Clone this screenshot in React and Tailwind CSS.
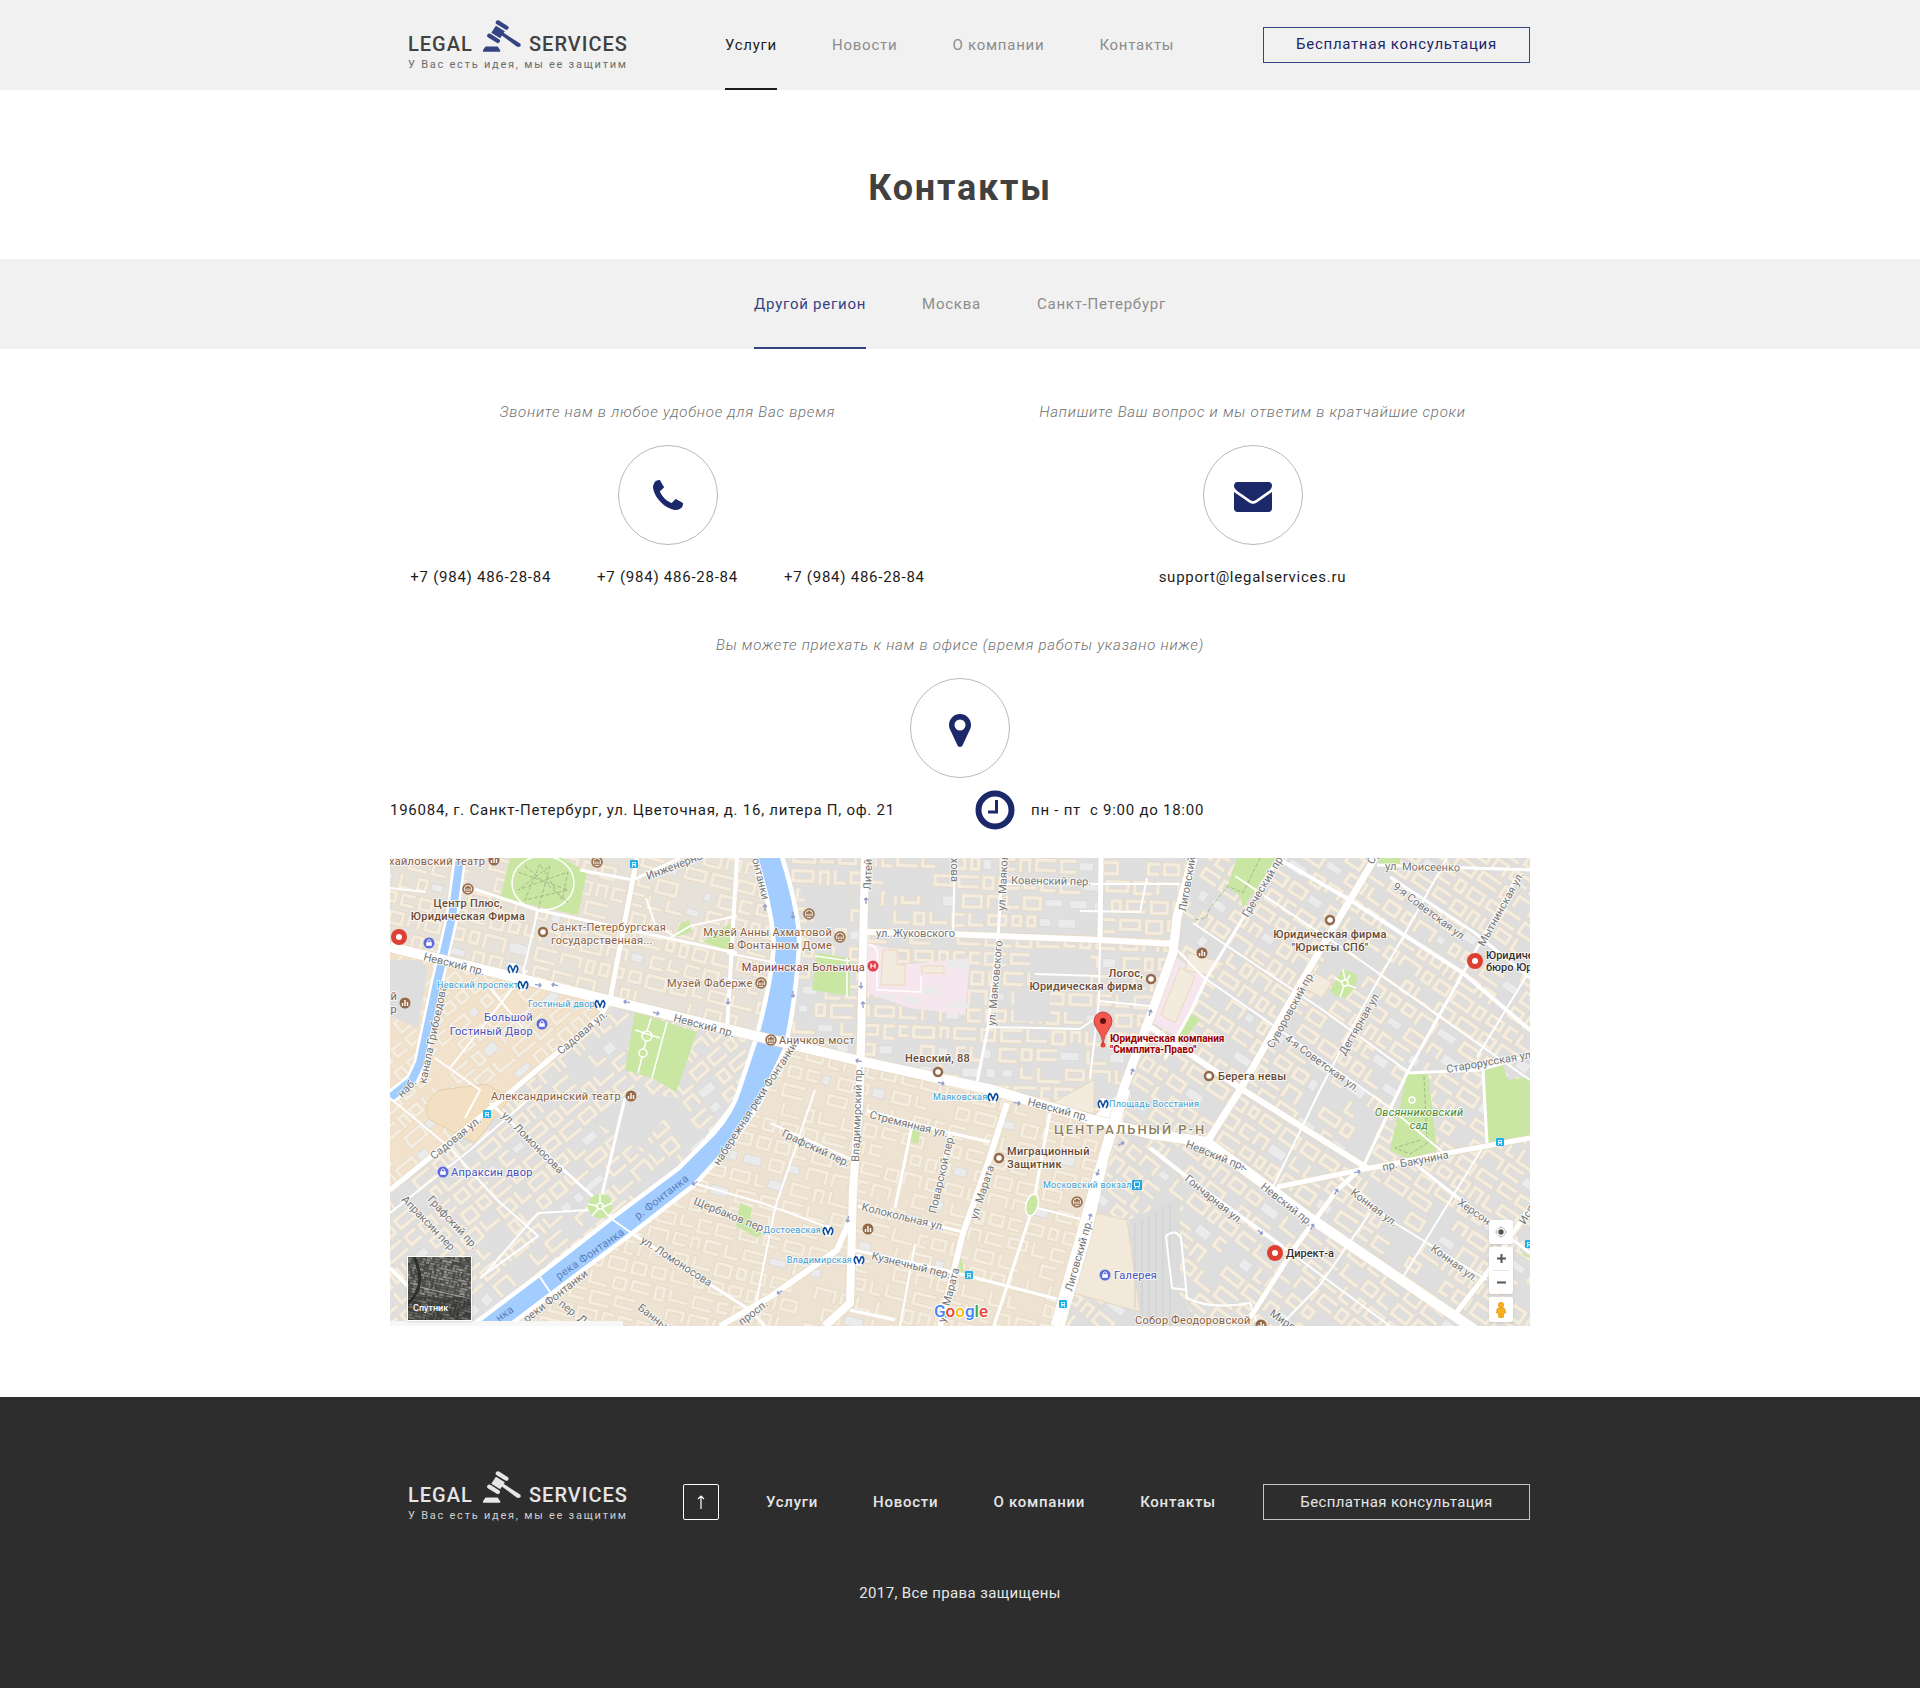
import React from 'react';
import clsx from 'clsx';

const navLinks = ['Услуги', 'Новости', 'О компании', 'Контакты'];
const regions = ['Другой регион', 'Москва', 'Санкт-Петербург'];
const phones = ['+7 (984) 486-28-84', '+7 (984) 486-28-84', '+7 (984) 486-28-84'];

const Gavel = () => (
  <svg className="w-[38px] h-8 shrink-0" viewBox="0 0 115 96" fill="currentColor" aria-hidden="true">
    <path d="M45 7 L71 23 M19 47 L45 63" stroke="currentColor" strokeWidth="13" strokeLinecap="round" />
    <path d="M39 17 L66 34 L52 55 L25 38 Z" />
    <path d="M54 44 L60 37 L111 70 Q117 76 112 80 Q108 83 102 80 Z" />
    <path d="M8 80 h36 l5 6 v3 h3 v7 h-52 v-7 h3 v-3 z" />
  </svg>
);

const PhoneIcon = () => (
  <svg className="w-[30px] h-[30px]" viewBox="0 128 1408 1408" fill="currentColor" aria-hidden="true">
    <path d="M1408 1240q0 27-10 70.500t-21 68.500q-21 50-122 106-94 51-186 51-27 0-53-3.500t-57.500-12.500-47-14.500-55.500-20.500-49-18q-98-35-175-83-127-79-264-216t-216-264q-48-77-83-175-3-9-18-49t-20.500-55.500-14.500-47-12.500-57.500-3.500-53q0-92 51-186 56-101 106-122 25-11 68.500-21t70.500-10q14 0 21 3 18 6 53 76 11 19 30 54t35 63.500 31 53.500q3 4 17.500 25t21.500 35.500 7 28.500q0 20-28.500 50t-62 55-62 53-28.500 46q0 9 5 22.500t8.500 20.500 14 24 11.500 19q76 137 174 235t235 174q2 1 19 11.500t24 14 20.500 8.500 22.500 5q18 0 46-28.500t53-62 55-62 50-28.500q14 0 28.500 7t35.500 21.500 25 17.500q25 15 53.500 31t63.500 35 54 30q70 35 76 53 3 7 3 21z" />
  </svg>
);

const EnvelopeIcon = () => (
  <svg className="w-[38px] h-[30px] mt-1" viewBox="0 256 1792 1408" fill="currentColor" aria-hidden="true">
    <path d="M1792 710v794q0 66-47 113t-113 47h-1472q-66 0-113-47t-47-113v-794q44 49 101 87 362 246 497 345 57 42 92.500 65.500t94.500 48 110 24.500h2q51 0 110-24.500t94.500-48 92.500-65.500q170-123 498-345 57-39 100-87zm0-294q0 79-49 151t-122 123q-376 261-468 325-10 7-42.500 31t-54 38.500-52 32.500-57.500 27-50 9h-2q-23 0-50-9t-57.500-27-52-32.500-54-38.500-42.500-31q-91-64-262-182.500t-205-142.500q-62-42-117-115.500t-55-136.500q0-78 41.500-130t118.500-52h1472q65 0 112.500 47t47.500 113z" />
  </svg>
);

const MarkerIcon = () => (
  <svg className="w-[22px] h-[33px] mt-1" viewBox="0 128 1024 1536" fill="currentColor" aria-hidden="true">
    <path d="M768 640q0-106-75-181t-181-75-181 75-75 181 75 181 181 75 181-75 75-181zm256 0q0 109-33 179l-364 774q-16 33-47.500 52t-67.500 19-67.500-19-46.500-52l-365-774q-33-70-33-179 0-212 150-362t362-150 362 150 150 362z" />
  </svg>
);

const Logo = ({ dark }) => (
  <a href="#" className={clsx('block ml-[18px] w-[225px]', dark ? 'text-[#e6e6e6]' : 'text-[#414141]')}>
    <span className="flex items-end text-xl leading-6 font-medium tracking-[1px]">
      <span className="w-[75px]">LEGAL</span>
      <span className={clsx('mb-1 mr-2', dark ? 'text-[#e6e6e6]' : 'text-[#364382]')}>
        <Gavel />
      </span>
      <span>SERVICES</span>
    </span>
    <span className={clsx('block text-[11px] leading-[18px] tracking-[0.16em] whitespace-nowrap', dark ? 'text-[#cfcfcf]' : 'text-[#6b6b6b]')}>
      У Вас есть идея, мы ее защитим
    </span>
  </a>
);

const CircleIcon = ({ children }) => (
  <div className="w-[100px] h-[100px] rounded-full border border-[#b9b9b9] flex items-center justify-center text-[#1b2869]">
    {children}
  </div>
);

const Caption = ({ children }) => (
  <p className="text-[15px] leading-6 italic font-light tracking-wider text-[#6f6f6f]">{children}</p>
);

// ---------- map ----------

// base: ground colour, angle: direction of the street grid
const districts = [
  { id: 'd1', points: '0,0 380,0 400,90 385,186 0,92', angle: 14, base: '#e6e1d9', seed: 3 },
  { id: 'd2', points: '0,92 225,146 205,165 0,334', angle: -40, base: '#f3e2cb', seed: 8 },
  { id: 'd3', points: '205,165 225,146 385,186 350,235 290,312 90,468 0,468 0,334', angle: -40, base: '#dfdfdf', seed: 12 },
  { id: 'd4', points: '385,0 803,0 783,95 733,232 700,262 385,188 405,90', angle: 2, base: '#dfdfdf', seed: 21 },
  { id: 'd5', points: '385,188 733,265 663,468 110,468 303,325', angle: 14, base: '#eee3d3', seed: 30 },
  { id: 'd6', points: '803,0 1140,0 1140,468 1060,468 817,284 733,265 733,232 783,95', angle: 34, base: '#dedede', seed: 44 },
  { id: 'd7', points: '733,265 817,284 1060,455 1080,468 663,468', angle: 38, base: '#dedede', seed: 51 },
];

const makeRandom = (seed) => {
  let s = seed * 7919;
  return () => {
    s = (s * 16807) % 2147483647;
    return s / 2147483647;
  };
};

const makeBuildings = ({ points, angle, seed }) => {
  const random = makeRandom(seed);
  const list = points.split(' ').map((p) => p.split(',').map(Number));
  const xs = list.map((p) => p[0]);
  const ys = list.map((p) => p[1]);
  const cx = (Math.min(...xs) + Math.max(...xs)) / 2;
  const cy = (Math.min(...ys) + Math.max(...ys)) / 2;
  const r = Math.hypot(Math.max(...xs) - cx, Math.max(...ys) - cy);
  const rad = (angle * Math.PI) / 180;
  const result = [];
  for (let y = -r; y < r; y += 19) {
    let x = -r;
    while (x < r) {
      const w = 11 + Math.round(random() * 14);
      const kind = random();
      const px = cx + x * Math.cos(rad) - y * Math.sin(rad);
      const py = cy + x * Math.sin(rad) + y * Math.cos(rad);
      if (px > -30 && px < 1170 && py > -30 && py < 500 && kind < 0.9) {
        result.push({ x: cx + x, y: cy + y, w, h: 13 + Math.round(random() * 3), kind });
      }
      x += w + 3;
    }
  }
  return { cx, cy, items: result };
};

const shape = ({ x, y, w, h, kind }) => {
  if (kind < 0.35) return `M${x} ${y}h${w}v${h}h${-w}z M${x + 4} ${y + 4}v${h - 8}h${w - 8}v${8 - h}z`;
  if (kind < 0.55) return `M${x} ${y}h${w}v4h${4 - w}v${h - 8}h${w - 4}v4h${-w}z`;
  if (kind < 0.7) return `M${x} ${y}h4v${h - 4}h${w - 4}v4h${-w}z`;
  if (kind < 0.8) return `M${x} ${y}h${w}v${h}h-4v${4 - h}h${8 - w}v${h - 4}h-4z`;
  return `M${x} ${y + 3}h${w - 4}v${h - 6}h${4 - w}z`;
};

const District = (district) => {
  const { id, points, angle, base } = district;
  const { cx, cy, items } = makeBuildings(district);
  return (
    <g clipPath={`url(#${id})`}>
      <clipPath id={id}>
        <polygon points={points} />
      </clipPath>
      <polygon points={points} fill={base} />
      <g transform={`rotate(${angle} ${cx} ${cy})`} strokeWidth="0.7">
        {items.map((item, i) => (
          <path
            key={i}
            d={shape(item)}
            fill={item.kind > 0.8 ? '#ebebeb' : '#f3ecdf'}
            stroke={item.kind > 0.8 ? '#d8d8d8' : '#e5d8c1'}
          />
        ))}
      </g>
    </g>
  );
};

const parks = [
  'M120 0H172L197 14L188 57L110 40Z',
  'M299 62L302 74L285 79L290 66Z',
  'M342 64V94L313 84Z',
  'M245 154L307 174L286 234L262 220L235 212Z',
  'M427 95L460 100V138L422 132Z',
  'M847 0H887L853 50L850 38L837 29Z',
  'M953 111L967 117L966 128L956 140L945 138L940 132Z',
  'M800 155L810 162L795 180L787 177Z',
  'M987 0H1010V8L990 7Z',
  'M1017 216L1038 215L1047 292L1020 302L1000 292Z',
  'M1093 212L1112 205L1118 222L1140 219V277L1097 285Z',
  'M571 400L575 417L567 415Z',
  'M522 268L531 270L528 286L519 284Z',
  'M350 345L362 350L360 362L372 375L368 380L346 368Z',
  'M1131 394L1140 398V400L1134 398Z',
];

// [path, width]
const roads = [
  ['M75 28L148 52L240 72L347 95', 3],
  ['M148 52L133 115', 2],
  ['M190 12L243 22L290 0', 3],
  ['M280 80L300 68L347 58', 2],
  ['M256 40L265 66L285 79', 2],
  ['M347 0L337 172', 4],
  ['M337 95L386 105', 2],
  ['M0 240L60 290L105 340L148 378L90 420', 2],
  ['M100 245L155 295L210 345L223 362', 3],
  ['M210 345L235 240', 3],
  ['M148 355L200 352', 2],
  ['M148 355L95 416', 2],
  ['M0 410L20 430L50 468', 4],
  ['M100 130L133 170', 2],
  ['M0 30L35 34', 2],
  ['M45 200L90 232L75 260', 2],
  ['M0 355L80 292L140 240', 2],
  ['M137 112L60 210', 2],
  ['M240 374L310 420L360 452L375 468', 3],
  ['M303 325L372 345L440 370', 2],
  ['M380 265L463 302', 2],
  ['M425 232L385 350L365 450', 2],
  ['M477 253L560 275L600 284', 3],
  ['M522 268L505 350', 3],
  ['M560 275L545 350', 2],
  ['M468 348L573 374', 3],
  ['M465 392L567 415L667 441', 3],
  ['M525 386L510 468', 2],
  ['M460 452L505 462', 3],
  ['M660 255L645 336M640 358L604 468', 3],
  ['M648 350L690 361', 2],
  ['M565 0L563 75', 2],
  ['M613 0L608 79L598 169L587 225', 3],
  ['M598 169L690 171L703 162', 2],
  ['M645 116L709 118', 2],
  ['M613 26L790 26M690 53L750 54L757 20', 2],
  ['M709 143L760 148', 2],
  ['M711 0L710 82', 5],
  ['M710 82L709 142L700 220', 2],
  ['M887 2L850 65L817 119L800 155L775 200', 3],
  ['M1057 0L1013 79L973 149L930 232L883 329', 2],
  ['M1000 19L1085 75L1140 120', 3],
  ['M845 18L960 95L1073 175L1140 222', 2],
  ['M887 0L960 42L1073 115L1140 172', 4],
  ['M803 65L930 150L1020 215', 2],
  ['M785 90L813 119L880 165L1000 250L1060 300', 2],
  ['M1140 112L1087 199', 2],
  ['M1017 215L1090 212L1140 197', 3],
  ['M1127 19L1073 115L1017 215L973 309', 3],
  ['M1093 212L1097 285', 3],
  ['M987 7L1140 12', 3],
  ['M950 319L1000 362L1097 422', 2],
  ['M1093 289L1013 419', 2],
  ['M980 355L930 427L890 468', 2],
  ['M893 389L1000 468', 2],
  ['M1020 302L1067 339L1140 395', 3],
  ['M760 290L810 329L893 389', 4],
  ['M887 329L960 314L1047 297L1140 280', 5],
  ['M1140 349L1097 415L1063 459', 5],
  ['M973 309L947 332L903 392L860 460', 5],
  ['M760 169L850 230L977 310', 6],
  ['M985 0L960 42L920 109L850 232L817 284', 7],
  ['M247 0L237 52L220 142L210 159L123 232L0 332', 5],
  ['M477 74L560 76L710 82L785 86', 6],
  ['M617 245L600 299L573 375L550 468', 6],
  ['M463 355L447 392L380 439L330 468', 6],
  ['M475 0L470 232L463 332L460 445L435 468', 8],
  ['M803 0L787 59L783 95L760 159L733 232L707 319L665 468', 9],
  ['M738 232L716 300L698 380L672 468', 5],
  ['M0 89L370 179L470 203L603 232L700 261L760 276L817 284L920 360L1060 455L1085 472', 10],
];

const BROWN = 'fill-[#8a6142] text-[11px] tracking-wide';
const DARK = 'fill-[#6a4a35] text-[11px] font-medium tracking-wide';
const STREET = 'fill-[#757575] text-[11px]';
const METRO = 'fill-[#3a9fd6] text-[9px] tracking-wide';
const SHOP = 'fill-[#4950bd] text-[11px] tracking-wide';
const RED = 'fill-[#9c0000] text-[10px] font-bold';
const RIVER = 'fill-[#5a80bd] text-[11px] tracking-wide';
const BLACK = 'fill-[#333333] text-[11px] font-medium';
const GREEN = 'fill-[#4a8a2c] text-[11px] italic tracking-wide';

// [text, x, y, style, rotation, anchor]
const labels = [
  ['Невский пр.', 33, 102, STREET, 14],
  ['Невский пр.', 283, 163, STREET, 15],
  ['Невский пр.', 637, 247, STREET, 15],
  ['Невский пр.', 795, 289, STREET, 22],
  ['Невский пр.', 870, 330, STREET, 38],
  ['Садовая ул.', 171, 197, STREET, -40],
  ['Садовая ул.', 44, 302, STREET, -39],
  ['канала Грибоедова', 36, 226, STREET, -78],
  ['наб.', 12, 240, STREET, -45],
  ['Инженерная', 258, 22, STREET, -21],
  ['онтанки', 362, 1, STREET, 76],
  ['Литейн', 481, 32, STREET, -88],
  ['хова', 561, 0, STREET, 90],
  ['ул. Маяков', 615, 53, STREET, -87],
  ['ул. Маяковского', 605, 168, STREET, -85],
  ['Ковенский пер.', 621, 26, STREET, 1],
  ['ул. Жуковского', 486, 79, STREET, 0],
  ['Лиговский', 796, 54, STREET, -80],
  ['Греческий пр.', 858, 60, STREET, -59],
  ['ул. Моисеенко', 995, 12, STREET, 1],
  ['9-я Советская ул.', 1002, 30, STREET, 37],
  ['Мытнинская ул.', 1094, 89, STREET, -61],
  ['Суворовский пр.', 883, 191, STREET, -61],
  ['Ср', 983, 7, STREET, -61],
  ['4-я Советская ул.', 894, 182, STREET, 36],
  ['Дегтярная ул.', 955, 198, STREET, -60],
  ['Старорусская ул', 1057, 215, STREET, -10],
  ['ул. Ломоносова', 111, 258, STREET, 45],
  ['Апраксин пер.', 11, 342, STREET, 46],
  ['Графский пр.', 37, 342, STREET, 47],
  ['набережная реки Фонтанки', 329, 308, STREET, -57],
  ['реки Фонтанки', 137, 465, STREET, -38],
  ['пер. Д', 168, 447, STREET, 38],
  ['Щербаков пер.', 303, 346, STREET, 22],
  ['ул. Ломоносова', 250, 384, STREET, 33],
  ['Банный', 247, 451, STREET, 38],
  ['просп.', 352, 468, STREET, -38],
  ['Графский пер.', 391, 278, STREET, 25],
  ['Владимирский пр.', 469, 304, STREET, -88],
  ['Стремянная ул.', 479, 260, STREET, 14],
  ['Поварской пер.', 546, 356, STREET, -77],
  ['Колокольная ул.', 471, 352, STREET, 14],
  ['Кузнечный пер.', 481, 401, STREET, 14],
  ['ул. Марата', 587, 362, STREET, -72],
  ['ул. Марата', 555, 465, STREET, -75],
  ['Лиговский пр.', 682, 434, STREET, -74],
  ['Гончарная ул.', 794, 322, STREET, 39],
  ['пр. Бакунина', 993, 313, STREET, -11],
  ['Конная ул.', 960, 336, STREET, 37],
  ['Конная ул.', 1040, 392, STREET, 36],
  ['Херсонс', 1067, 346, STREET, 35],
  ['Исп', 1135, 367, STREET, -60],
  ['Мирг', 879, 457, STREET, 35],
  ['р. Фонтанка', 248, 362, RIVER, -38],
  ['река Фонтанка', 169, 422, RIVER, -35],
  ['нка', 109, 464, RIVER, -35],
  ['хайловский театр', -1, 7, BROWN],
  ['Центр Плюс,', 78, 49, DARK, 0, 'middle'],
  ['Юридическая Фирма', 78, 62, DARK, 0, 'middle'],
  ['Санкт-Петербургская', 161, 73, BROWN],
  ['государственная...', 161, 86, BROWN],
  ['Музей Анны Ахматовой', 442, 78, BROWN, 0, 'end'],
  ['в Фонтанном Доме', 442, 91, BROWN, 0, 'end'],
  ['Музей Фаберже', 277, 129, BROWN],
  ['Мариинская Больница', 475, 113, 'fill-[#8f3b3b] text-[11px] tracking-wide', 0, 'end'],
  ['Невский проспект', 47, 130, METRO],
  ['Гостиный двор', 138, 149, METRO],
  ['Большой', 143, 163, SHOP, 0, 'end'],
  ['Гостиный Двор', 143, 177, SHOP, 0, 'end'],
  ['й', 7, 142, BROWN, 0, 'end'],
  ['р', 7, 155, BROWN, 0, 'end'],
  ['Логос,', 753, 119, DARK, 0, 'end'],
  ['Юридическая фирма', 753, 132, DARK, 0, 'end'],
  ['Юридическая компания', 720, 184, RED],
  ['"Симплита-Право"', 720, 195, RED],
  ['Аничков мост', 389, 186, BROWN],
  ['Невский, 88', 515, 204, DARK],
  ['Юридическая фирма', 940, 80, DARK, 0, 'middle'],
  ['"Юристы СПб"', 940, 93, DARK, 0, 'middle'],
  ['Юридиче', 1096, 101, BLACK],
  ['бюро Юр', 1096, 113, BLACK],
  ['Берега невы', 828, 222, DARK],
  ['Александринский театр', 101, 242, BROWN],
  ['Апраксин двор', 61, 318, SHOP],
  ['Достоевская', 431, 375, METRO, 0, 'end'],
  ['Владимирская', 462, 405, METRO, 0, 'end'],
  ['Маяковская', 543, 242, METRO],
  ['Площадь Восстания', 719, 249, METRO],
  ['Миграционный', 617, 297, DARK],
  ['Защитник', 617, 310, DARK],
  ['Московский вокзал', 653, 330, METRO],
  ['Галерея', 724, 421, SHOP],
  ['Собор Феодоровской', 745, 466, BROWN],
  ['Директ-а', 896, 399, BLACK],
  ['Овсянниковский', 1029, 258, GREEN, 0, 'middle'],
  ['сад', 1029, 271, GREEN, 0, 'middle'],
  ['ЦЕНТРАЛЬНЫЙ Р-Н', 664, 276, 'fill-[#8d8060] text-[13px] font-medium tracking-[2px]'],
];

// brown: museum / office dots, the inner glyph differs
const rings = [[153, 74], [761, 121], [548, 214], [940, 62], [819, 218], [609, 300]];
const museums = [[207, 4], [78, 31], [419, 56], [450, 79], [371, 125], [687, 344], [381, 182]];
const theatres = [[104, 2], [241, 238], [812, 95], [15, 145], [478, 371], [871, 467]];
const metros = [[123, 111], [133, 127], [210, 146], [438, 373], [469, 402], [603, 239], [713, 246]];
const shops = [[39, 85], [152, 166], [53, 314], [715, 417]];
const trams = [[244, 6], [97, 256], [579, 417], [673, 446], [1110, 284], [1139, 386]];
const redDots = [[9, 79], [1085, 103], [885, 395]];
const arrows = [
  [148, 127, 10], [165, 127, 190], [237, 144, 190], [266, 155, 15], [338, 143, 90], [403, 57, 90], [403, 136, 90],
  [476, 43, -90], [471, 127, 90], [473, 147, -90], [469, 203, 190], [551, 225, 15], [627, 245, 10], [760, 155, -70],
  [742, 214, -70], [731, 286, -25], [708, 314, 110], [700, 359, -75], [458, 361, 100], [390, 434, 150], [854, 310, 215],
  [967, 314, -10], [946, 334, -60], [922, 369, -60], [870, 374, 40], [375, 50, -90], [305, 325, 150],
];

const MapDrawing = () => (
  <svg className="block w-full" viewBox="0 0 1140 468" role="img" aria-label="Карта проезда" fontFamily='Roboto, "Noto Sans", sans-serif'>
    {districts.map((district) => (
      <District key={district.id} {...district} />
    ))}

    {/* hospitals */}
    <path d="M477 85L507 92L510 107L580 100L575 157L520 150L477 135Z M785 99L817 119L787 179L760 163Z" fill="#f6e6ee" />
    <path d="M493 92h14v15h8v20h-24z M532 108h22v7h-22z M790 109l15 10-20 46-14-8z" fill="#f3ebdd" stroke="#ecd9bb" />
    <path d="M534 129h14v7h-14z M491 136h13v5h-13z M516 139h13v7h-13z M557 103h22v8h-22z M560 145h8v-6h5v6h6v5h-19z" fill="#ebebeb" />
    <path d="M477 87Q490 86 487 105V132L531 134V118" fill="none" stroke="#fff" strokeWidth="1.5" />

    {/* plots with large buildings */}
    <path d="M707 355L737 362L750 454L680 434Z" fill="#f3e9da" stroke="#e5d8c1" />
    <path d="M50 232Q30 245 40 262L85 285L120 240L96 226Z" fill="#f3dfc1" stroke="#e5d0ae" />
    <path d="M798 95L835 105L818 117L795 112Z M920 112L942 124L932 140L915 130Z M660 246L704 222V256Z" fill="#f3ebdd" stroke="#e5d8c1" />
    <path d="M738 362L790 340L790 440L812 468H752Z" fill="#dcdcdc" />
    <path d="M745 365V450M752 362V460M759 358V468M766 354V468M773 350V468M780 346V468" stroke="#cfcfcf" />
    <path d="M776 378Q785 370 791 380L797 440Q820 452 860 445L868 468M776 378L782 430L797 432" fill="none" stroke="#fff" strokeWidth="2" />
    <path d="M640 93h60v40h-40v30h-36v-30h16z M490 12h48v26h-42z M410 30h50v40h-34z" fill="#dedede" />
    <path d="M0 102h30l8 8-10 60-28-12z M250 236L290 240L250 290L200 262Z" fill="#dedede" />

    <g fill="#c9e6a2">
      {parks.map((d) => (
        <path key={d} d={d} />
      ))}
      <circle cx="210" cy="348" r="12" />
    </g>
    <g fill="none" stroke="#fff" strokeWidth="1.5">
      <ellipse cx="153" cy="25" rx="31" ry="27" />
      <circle cx="257" cy="178" r="5" />
      <circle cx="253" cy="195" r="4" />
      <path d="M261 160L257 173M256 183L254 191M252 199L248 215M245 172L270 180M277 164L262 220M457 100V138M425 98L460 103" />
      <circle cx="955" cy="125" r="3" />
      <path d="M953 111L955 122M945 120L952 124M958 127L966 130M954 128L950 139M960 117L957 122" />
      <circle cx="1022" cy="242" r="3" />
    </g>
    <g fill="none" stroke="#a5b98a" strokeDasharray="4 2">
      <path d="M128 14L178 32L135 42L150 6L172 42L178 14L128 32L160 8L148 52M135 8L178 44" />
      <path d="M870 0L853 35L838 28L820 50L816 60L805 62" />
      <path d="M1034 218L1037 285L1020 296L1005 290L1030 282" />
    </g>

    {/* canal and river */}
    <path d="M70 0L62 59L47 125L30 205L22 222L0 240" fill="none" stroke="#fff" strokeWidth="13" />
    <path d="M70 0L62 59L47 125L30 205L22 222L0 240" fill="none" stroke="#a3ccff" strokeWidth="8" />
    <path
      d="M368 0H390Q407 55 407 85Q404 140 393 190L367 245L340 285L303 325L240 374L160 434L115 468H85L150 419L223 362L290 312L325 277Q345 255 352 230L368 182Q385 120 386 85Q384 50 368 0Z"
      fill="#a3ccff"
      stroke="#fff"
      strokeWidth="9"
      paintOrder="stroke"
    />

    <g fill="none" strokeLinejoin="round" stroke="#e9d9be" opacity="0.5">
      {roads.filter(([, width]) => width > 4).map(([d, width]) => (
        <path key={d} d={d} strokeWidth={width + 2} />
      ))}
    </g>
    <g fill="none" stroke="#fff" strokeLinejoin="round">
      {roads.map(([d, width]) => (
        <path key={d} d={d} strokeWidth={width} />
      ))}
      <path d="M223 362L240 374M150 419L160 434" strokeWidth="2" />
    </g>

    {/* round gardens lie over the streets */}
    <circle cx="210" cy="348" r="12" fill="#c9e6a2" />
    <path d="M210 336V345M198 346L207 348M213 349L222 345M208 351L202 358M212 350L218 358" stroke="#fff" strokeWidth="1.5" />
    <circle cx="210" cy="348" r="3" fill="none" stroke="#fff" strokeWidth="1.5" />
    <ellipse cx="642" cy="347" rx="6" ry="11" transform="rotate(15 642 347)" fill="#c9e6a2" stroke="#fff" strokeWidth="1.5" />

    <g fill="none" stroke="#8f9ccb" strokeWidth="1.3">
      {arrows.map(([x, y, angle]) => (
        <path key={`${x}-${y}`} d="M-3 0H3M1 -2L3 0L1 2" transform={`translate(${x} ${y}) rotate(${angle})`} />
      ))}
    </g>

    <g stroke="#fff" strokeWidth="2" strokeOpacity="0.75" strokeLinejoin="round" paintOrder="stroke">
      {labels.map(([text, x, y, style, angle = 0, anchor = 'start']) => (
        <text
          key={`${text}-${x}-${y}`}
          className={style}
          textAnchor={anchor}
          stroke={style === RIVER ? 'none' : undefined}
          transform={`translate(${x} ${y}) rotate(${angle})`}
        >
          {text}
        </text>
      ))}
    </g>

    {rings.map(([x, y]) => (
      <circle key={`${x}-${y}`} cx={x} cy={y} r="4" fill="#fff" stroke="#93694a" strokeWidth="2.5" />
    ))}
    {museums.map(([x, y]) => (
      <g key={`${x}-${y}`} transform={`translate(${x} ${y})`}>
        <circle r="5" fill="#e9dccf" stroke="#93694a" strokeWidth="1.5" />
        <path d="M-3 -0.8L0 -3L3 -0.8ZM-2.2 0V2M0 0V2M2.2 0V2M-3 2.5H3" fill="#93694a" stroke="#93694a" strokeWidth="0.8" />
      </g>
    ))}
    {theatres.map(([x, y]) => (
      <g key={`${x}-${y}`} transform={`translate(${x} ${y})`}>
        <circle r="5.5" fill="#93694a" />
        <path d="M-2.5 3V0M0 3V-3M2.5 3V-1" stroke="#fff" strokeWidth="1.4" />
      </g>
    ))}
    {metros.map(([x, y]) => (
      <g key={`${x}-${y}`} transform={`translate(${x} ${y})`} fill="none" stroke="#0c4a9c" strokeWidth="1.6">
        <circle r="5.4" stroke="#fff" fill="#fff" strokeWidth="1" />
        <path d="M-3 -4Q-6.500 0 -3 4M3 -4Q6.500 0 3 4M-2.500 -3.500L0 2.500L2.500 -3.500" />
      </g>
    ))}
    {shops.map(([x, y]) => (
      <g key={`${x}-${y}`} transform={`translate(${x} ${y})`}>
        <circle r="5.5" fill="#5c6be0" />
        <path d="M-2.8 -0.8H2.8V2.8H-2.8Z" fill="#fff" />
        <path d="M-1.4 -1V-2.5Q0 -4 1.4 -2.5V-1" fill="none" stroke="#fff" strokeWidth="0.9" />
      </g>
    ))}
    {trams.map(([x, y]) => (
      <g key={`${x}-${y}`} transform={`translate(${x} ${y})`}>
        <rect x="-4" y="-4" width="8" height="8" rx="1" fill="#1fb0ec" />
        <path d="M-2 -2H2V1.5H-2ZM-2 2H-1V3H-2ZM1 2H2V3H1Z" fill="#fff" />
        <path d="M-1.4 -0.6H1.4" stroke="#1fb0ec" strokeWidth="1.4" />
      </g>
    ))}
    <rect x="742" y="322" width="10" height="10" rx="1" fill="#1fa5dc" />
    <path d="M744.500 324H749.500V328.500H744.500ZM744.500 331L746 329M749.500 331L748 329" fill="none" stroke="#fff" />
    <circle cx="483" cy="108" r="5.500" fill="#e0404a" />
    <path d="M481 105.500V110.500M485 105.500V110.500M481 108H485" stroke="#fff" strokeWidth="1.200" />
    {redDots.map(([x, y]) => (
      <g key={`${x}-${y}`}>
        <circle cx={x} cy={y} r="8" fill="#dd4033" />
        <circle cx={x} cy={y} r="3" fill="#fff" />
      </g>
    ))}

    {/* office pin */}
    <circle cx="713" cy="187" r="2.500" fill="#e8453c" />
    <path d="M713 186Q712 177 707 171Q704 167 704 163A9 9 0 0 1 722 163Q722 167 719 171Q714 177 713 186Z" fill="#f4574e" stroke="#b8352e" strokeWidth="0.800" />
    <circle cx="713" cy="163" r="3" fill="#5c1310" />

    <text x="544" y="459" className="text-[17px] font-medium" stroke="#fff" strokeWidth="2" paintOrder="stroke">
      <tspan fill="#4285f4">G</tspan>
      <tspan fill="#ea4335">o</tspan>
      <tspan fill="#fbbc05">o</tspan>
      <tspan fill="#4285f4">g</tspan>
      <tspan fill="#34a853">l</tspan>
      <tspan fill="#ea4335">e</tspan>
    </text>
    <rect y="463" width="233" height="5" fill="#f7f7f7" />
  </svg>
);

const satelliteCells = () => {
  const random = makeRandom(17);
  const cells = [];
  for (let y = 0; y < 63; y += 2) {
    for (let x = 0; x < 63; x += 3) {
      cells.push({ x, y, w: 1 + random() * 3, o: random() * 0.6 });
    }
  }
  return cells;
};

const SatelliteButton = () => (
  <button type="button" className="absolute left-[17px] bottom-[5px] w-[65px] h-[65px] border border-white overflow-hidden bg-[#454744] shadow">
    <svg className="absolute inset-0 w-full h-full" viewBox="0 0 63 63" aria-hidden="true">
      <g transform="rotate(12 31 31) scale(1.3) translate(-8 -8)">
        {satelliteCells().map(({ x, y, w, o }) => (
          <rect key={`${x}-${y}`} x={x} y={y} width={w} height="1.5" fill="#d8d0c8" opacity={o} />
        ))}
      </g>
      <path d="M6 0Q15 18 10 32Q6 42 0 46" fill="none" stroke="#2b2f2d" strokeWidth="3" />
      <path d="M12 30L63 42" stroke="#a9a39c" />
      <rect y="40" width="63" height="23" fill="#222" opacity="0.3" />
    </svg>
    <span className="absolute left-[5px] bottom-1 text-[9px] leading-4 font-medium text-white">Спутник</span>
  </button>
);

const MapControls = () => (
  <div className="absolute right-[17px] bottom-1 w-6 flex flex-col gap-[3px] text-[#555555]">
    <button type="button" aria-label="Моё местоположение" className="h-6 bg-white rounded-xs shadow flex items-center justify-center">
      <svg className="w-3 h-3" viewBox="0 0 12 12" aria-hidden="true">
        <circle cx="6" cy="6" r="4.500" fill="none" stroke="#bbbbbb" />
        <path d="M6 0V2M6 10V12M0 6H2M10 6H12" stroke="#bbbbbb" />
        <circle cx="6" cy="6" r="2.700" fill="#555555" />
      </svg>
    </button>
    <div className="h-[47px] bg-white rounded-xs shadow flex flex-col items-center">
      <button type="button" aria-label="Приблизить" className="flex-1 w-full flex items-center justify-center">
        <svg className="w-[9px] h-[9px]" viewBox="0 0 9 9" aria-hidden="true">
          <path d="M4.500 0V9M0 4.500H9" stroke="currentColor" strokeWidth="2" />
        </svg>
      </button>
      <div className="h-px w-4 bg-[#e6e6e6]" />
      <button type="button" aria-label="Отдалить" className="flex-1 w-full flex items-center justify-center">
        <svg className="w-[9px] h-[9px]" viewBox="0 0 9 9" aria-hidden="true">
          <path d="M0 4.500H9" stroke="currentColor" strokeWidth="2" />
        </svg>
      </button>
    </div>
    <button type="button" aria-label="Просмотр улиц" className="h-[25px] bg-white rounded-xs shadow flex items-center justify-center">
      <svg className="w-[10px] h-4" viewBox="0 0 10 16" fill="#fbb117" stroke="#d98a12" strokeWidth="0.600" aria-hidden="true">
        <path d="M2 6H8Q9.500 7 9.500 11H8L7.200 15.500H2.800L2 11H0.500Q0.500 7 2 6Z" />
        <circle cx="5" cy="3" r="2.700" />
        <path d="M5 11V15" />
      </svg>
    </button>
  </div>
);

const App = () => {
  return (
    <div className='bg-white text-[#1d1d1d] text-[15px] leading-6 font-["Roboto","Noto_Sans",sans-serif]'>
      <header className="bg-[#f1f1f1]">
        <div className="max-w-[1140px] h-[90px] mx-auto flex items-stretch">
          <div className="pt-5">
            <Logo />
          </div>
          <nav className="ml-[92px] flex gap-[55px] tracking-wider">
            {navLinks.map((link, i) => (
              <a
                key={link}
                href="#"
                className={clsx(
                  'flex items-center border-y-2 border-t-transparent whitespace-nowrap',
                  i === 0 ? 'border-b-[#1d1d1d] text-[#1d1d1d]' : 'border-b-transparent text-[#8c8c8c]'
                )}
              >
                {link}
              </a>
            ))}
          </nav>
          <button type="button" className="ml-auto self-center w-[267px] h-9 pb-0.5 border border-[#364382] text-[#1b2869] tracking-wider">
            Бесплатная консультация
          </button>
        </div>
      </header>

      <main>
        <h1 className="pt-[74px] pb-[47px] text-center text-4xl leading-12 font-bold tracking-wider text-[#414141]">Контакты</h1>

        <nav className="bg-[#f1f1f1] h-[90px] flex justify-center gap-14 tracking-wider">
          {regions.map((region, i) => (
            <a
              key={region}
              href="#"
              className={clsx(
                'flex items-center border-y-2 border-t-transparent',
                i === 0 ? 'border-b-[#364382] text-[#364382]' : 'border-b-transparent text-[#8c8c8c]'
              )}
            >
              {region}
            </a>
          ))}
        </nav>

        <div className="max-w-[1140px] mx-auto pt-[51px] pb-[71px]">
          <div className="grid grid-cols-2 gap-x-[30px]">
            <section className="flex flex-col items-center">
              <Caption>Звоните нам в любое удобное для Вас время</Caption>
              <div className="mt-[21px] mb-5">
                <CircleIcon>
                  <PhoneIcon />
                </CircleIcon>
              </div>
              <div className="flex gap-[46px] tracking-wider whitespace-nowrap">
                {phones.map((phone, i) => (
                  <a key={i} href="tel:+79844862884">{phone}</a>
                ))}
              </div>
            </section>

            <section className="flex flex-col items-center">
              <Caption>Напишите Ваш вопрос и мы ответим в кратчайшие сроки</Caption>
              <div className="mt-[21px] mb-5">
                <CircleIcon>
                  <EnvelopeIcon />
                </CircleIcon>
              </div>
              <a href="mailto:support@legalservices.ru" className="tracking-wider">support@legalservices.ru</a>
            </section>
          </div>

          <section className="mt-11 flex flex-col items-center">
            <Caption>Вы можете приехать к нам в офисе (время работы указано ниже)</Caption>
            <div className="mt-[21px]">
              <CircleIcon>
                <MarkerIcon />
              </CircleIcon>
            </div>
          </section>

          <div className="mt-3 mb-7 grid grid-cols-2 gap-x-[30px] items-center tracking-wider whitespace-nowrap">
            <address className="not-italic">196084, г. Санкт-Петербург, ул. Цветочная, д. 16, литера П, оф. 21</address>
            <p className="flex items-center gap-4">
              <svg className="w-10 h-10 text-[#1b2869]" viewBox="0 0 40 40" fill="none" stroke="currentColor" aria-hidden="true">
                <circle cx="20" cy="20" r="16.500" strokeWidth="6" />
                <path d="M21.500 10V22H13" strokeWidth="3" />
              </svg>
              <span className="whitespace-pre">пн - пт  с 9:00 до 18:00</span>
            </p>
          </div>

          <div className="relative overflow-hidden">
            <MapDrawing />
            <SatelliteButton />
            <MapControls />
          </div>
        </div>
      </main>

      <footer className="bg-[#2d2d2d] text-[#e6e6e6]">
        <div className="max-w-[1140px] mx-auto pt-[74px] pb-[83px]">
          <div className="flex items-center">
            <Logo dark />
            <a
              href="#"
              aria-label="Наверх"
              className="ml-[50px] w-9 h-9 mt-2 border border-white rounded-xs flex items-center justify-center text-white"
            >
              <svg className="w-2 h-[14px]" viewBox="0 0 8 14" fill="none" stroke="currentColor" aria-hidden="true">
                <path d="M4 14V1M1 4L4 1L7 4" strokeWidth="1.200" />
              </svg>
            </a>
            <nav className="ml-[47px] mt-2 flex gap-[55px] tracking-wider font-medium whitespace-nowrap">
              {navLinks.map((link) => (
                <a key={link} href="#">{link}</a>
              ))}
            </nav>
            <button type="button" className="ml-auto mt-2 w-[267px] h-9 border border-[#c4c4c4] tracking-wide">
              Бесплатная консультация
            </button>
          </div>
          <p className="mt-14 text-center tracking-wide">2017, Все права защищены</p>
        </div>
      </footer>
    </div>
  );
};

export default App;
